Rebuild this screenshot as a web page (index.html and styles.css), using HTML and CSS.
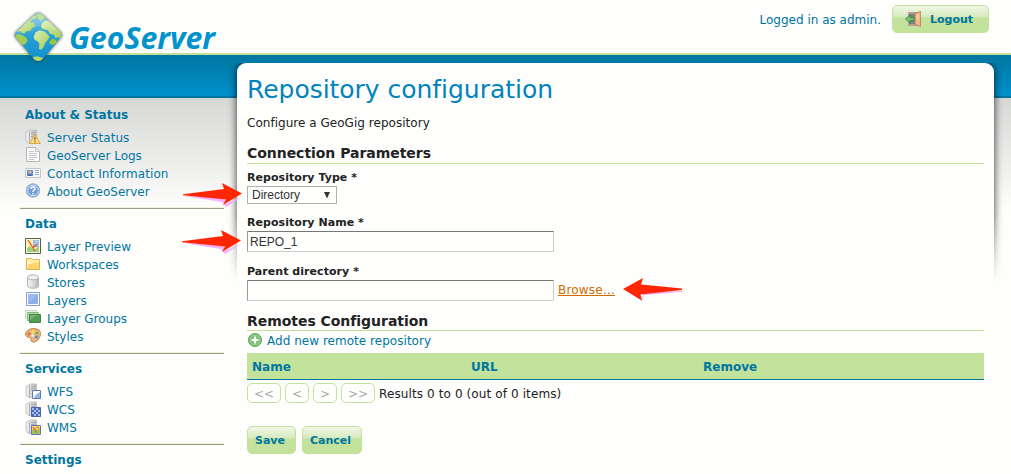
FILE: index.html
```html
<!DOCTYPE html>
<html lang="en">
<head>
<meta charset="utf-8">
<title>GeoServer: Repository configuration</title>
<link rel="stylesheet" href="styles.css">
</head>
<body>
<svg class="defs" width="0" height="0">
  <defs>
    <linearGradient id="metal"><stop offset="0" stop-color="#f2f2f2"/><stop offset=".5" stop-color="#dcdcdc"/><stop offset="1" stop-color="#b5b5b5"/></linearGradient>
    <linearGradient id="sea" x2="0" y2="1"><stop offset="0" stop-color="#8ccbe5"/><stop offset=".45" stop-color="#2ba0d5"/><stop offset="1" stop-color="#0a8dca"/></linearGradient>
    <linearGradient id="land" x2="1" y2="1"><stop offset="0" stop-color="#e1efb5"/><stop offset="1" stop-color="#9bcd53"/></linearGradient>
    <clipPath id="gem"><path d="M78 28Q91 16 104 28L156 77Q166 87 156 97L106 158Q91 172 76 158L26 97Q17 87 26 77Z"/></clipPath>
    <filter id="soft" x="-20%" y="-20%" width="140%" height="140%"><feGaussianBlur stdDeviation="4"/></filter>
  </defs>
  <symbol id="server" viewBox="0 0 16 16">
    <path d="M1 3.500L5 1H11.500V12L9 14.500H4L1 12.500Z" fill="url(#metal)" stroke="#bbb" stroke-width=".8"/>
    <path d="M4.500 3V14.500M6 3.500H10M6 5.500H10M6 7.500H10" stroke="#a2a2a2" stroke-width=".8" fill="none"/>
  </symbol>
  <symbol id="arrow" viewBox="0 0 62 26">
    <path d="M2 14L42 15L44 22L61 14L44 25L40 20Z" fill="#f5b0ff"/>
    <path d="M1 12.300L42 7L40 1L60 11.500L41 23L44 17.500L1 13.300Z" fill="#ff2600"/>
  </symbol>
</svg>

<header class="header">
  <svg class="logo" width="210" height="54" viewBox="0 0 210 54" role="img" aria-label="GeoServer">
    <g transform="translate(-4 -5) scale(.33333)">
      <path d="M78 26Q91 14 104 26L158 77Q168 87 158 97L106 160Q91 174 76 160L24 97Q14 87 24 77Z" fill="#333" opacity=".75" filter="url(#soft)"/>
      <g clip-path="url(#gem)">
        <path d="M15 15H170V175H15Z" fill="url(#sea)"/>
        <path d="M76 28L88 34L70 42L67 51L77 49L82 62L73 65L67 75L56 76L49 83L42 82L37 76L25 77V60Z" fill="url(#land)"/>
        <path d="M85 22L106 24L115 36L106 38L100 46L91 39Z" fill="#b8dd83"/>
        <path d="M101 53L112 43L119 45L126 41L160 77L168 90L156 101L151 93L142 96L138 86L126 83L119 72L106 70L99 64Z" fill="url(#land)"/>
        <path d="M83 79L95 73L111 77L125 92L119 102L113 109L106 124L100 132L93 128L94 113L88 105L80 102L77 92Z" fill="url(#land)"/>
        <path d="M22 86L38 85L53 94L59 102L54 112L45 117L41 126L28 108Z" fill="#9ecf50"/>
        <path d="M124 107L133 98L143 101L148 108L135 117L125 114Z" fill="#93c83f"/>
        <path d="M74 154L87 151L106 156L94 169L82 166Z" fill="#b7d866"/>
        <path d="M25 76L78 27Q91 15 104 27L158 79L138 73Q99 53 69 67T25 88Z" fill="#fff" opacity=".15"/>
      </g>
    </g>
    <text class="logo-text" x="57" y="37.500" textLength="146" lengthAdjust="spacingAndGlyphs">GeoServer</text>
  </svg>
  <div class="session">
    <span>Logged in as admin.</span>
    <a class="button logout">
      <svg width="17" height="16" viewBox="0 0 17 16"><path d="M3 1H15V15H3Z" fill="#b8a08b"/><path d="M4 3H10V13H4Z" fill="#74828a"/><path d="M10 2.500L15.500 .5V15.500L10 13Z" fill="#eeb983" stroke="#b57f53" stroke-width=".8"/><path d="M11.500 4L14 3V7.500L11.500 8Z" fill="#f7cf9f"/><path d="M.5 8L5 4V6.500H9V9.500H5V12Z" fill="#7dbe72" stroke="#35843c" stroke-width=".8"/></svg>
      <span>Logout</span>
    </a>
  </div>
</header>

<div class="page">
  <nav class="sidebar">
    <section class="menu">
      <h2>About &amp; Status</h2>
      <ul>
        <li><svg class="icon" viewBox="0 0 16 16"><use href="#server"/><path d="M10 5.500L15.300 14.500H4.700Z" fill="#ffe184" stroke="#dda642"/><path d="M10 8V11.500M10 12.300V13.500" stroke="#80602c" stroke-width="1.200"/></svg><span class="loose">Server Status</span></li>
        <li><svg class="icon" viewBox="0 0 16 16"><path d="M1.500 .5H10.500L14.500 4.500V14.500H1.500Z" fill="#fafafa" stroke="#b5b5b5"/><path d="M10.500 .5V4.500H14.500M4 4.500H9M4 6.500H12M4 8.500H12M4 10.500H12M4 12.500H9" fill="none" stroke="#c5c5c5"/></svg><span>GeoServer Logs</span></li>
        <li><svg class="icon" viewBox="0 0 16 16"><path d="M.5 3.500H15.500V12.500H.5Z" fill="#f5f7fa" stroke="#c5c5c5"/><path d="M2 5H8V11H2Z" fill="#5d8dd3"/><circle cx="5" cy="7" r="1.600" fill="#ffb56d"/><path d="M3 11Q5 7.500 7 11Z" fill="#3860a5"/><path d="M10 5.500H14M10 7.500H14M10 9.500H14" stroke="#9baabd"/></svg><span class="loose">Contact Information</span></li>
        <li><svg class="icon" viewBox="0 0 16 16"><circle cx="8" cy="7.500" r="6.700" fill="#6f9bd9" stroke="#9bb0d0"/><circle cx="8" cy="7.500" r="5.300" fill="none" stroke="#dce9fa"/><path d="M6 6Q6 4 8 4Q10 4 10 5.700Q10 6.700 8.700 7.300Q8 7.700 8 9M8 10V11.500" fill="none" stroke="#fff" stroke-width="1.500"/></svg><span>About GeoServer</span></li>
      </ul>
    </section>
    <section class="menu">
      <h2>Data</h2>
      <ul>
        <li><svg class="icon" viewBox="0 0 16 16"><path d="M.5 .5H15.500V15.500H.5Z" fill="#fff3a5" stroke="#52624d"/><path d="M8 2H14V9H8Z" fill="#91b8eb"/><path d="M2 10L5 8L9 12L14 8V14H2Z" fill="#9bd17e"/><path d="M9 3.500H14M9 6H14M11 2V8" stroke="#cbdffa" stroke-width=".7"/><path d="M3 2L10 13M8 10L12 6" fill="none" stroke="#e94f35" stroke-width="1.300"/><path d="M1.500 1.500H14.500V14.500H1.500Z" fill="none" stroke="#f6f9e7" stroke-width=".8"/></svg><span>Layer Preview</span></li>
        <li><svg class="icon" viewBox="0 0 16 16"><path d="M1.500 2.500H6.500L7.500 3.500H14.500V13.500H1.500Z" fill="#fff2b1" stroke="#e2b04d"/><path d="M2 7.500H6L8 6H14V13H2Z" fill="#ffd66d"/><path d="M2.500 12V7.500H6.500L8.500 6H13.500" fill="none" stroke="#fff2bd"/></svg><span>Workspaces</span></li>
        <li><svg class="icon" viewBox="0 0 16 16"><path d="M2.500 3V12C3 15 13 15 13.500 12V3Z" fill="url(#metal)" stroke="#b5b5b5"/><ellipse cx="8" cy="3.300" rx="5.500" ry="2.500" fill="#f0f0f0" stroke="#b5b5b5"/></svg><span>Stores</span></li>
        <li><svg class="icon" viewBox="0 0 16 16"><path d="M1.500 .5H14.500V13.500H1.500Z" fill="#fff" stroke="#829ed4"/><path d="M3 2H13V12H3Z" fill="#9bb9eb"/><path d="M3 12L13 2V12Z" fill="#8eade4"/></svg><span>Layers</span></li>
        <li><svg class="icon" viewBox="0 0 16 16"><path d="M.5 .5H11.500V8.500H.5Z" fill="#eaf4e7" stroke="#c5ddc3"/><path d="M2.500 2.500H13.500V10.500H2.500Z" fill="#b5d5af" stroke="#88b883"/><path d="M4.500 4.500H15.500V12.500H4.500Z" fill="#569c56" stroke="#3d8943"/><path d="M5 11Q9 5 15 5H5Z" fill="#7bb371"/></svg><span>Layer Groups</span></li>
        <li><svg class="icon" viewBox="0 0 16 16"><path d="M.5 6C1 1 9 -1 14 2C17 5 15 9 13 12C10 15 5 15 6 11C6 8 1 11 .5 6Z" fill="#eab67e" stroke="#c88755"/><circle cx="4" cy="6" r="1.700" fill="#e97148"/><circle cx="8" cy="3.500" r="1.500" fill="#ffe347"/><circle cx="12" cy="5" r="1.600" fill="#64b55b"/><circle cx="11.500" cy="9" r="1.600" fill="#5389cd"/><circle cx="7.500" cy="7.500" r="1.200" fill="#fff"/></svg><span>Styles</span></li>
      </ul>
    </section>
    <section class="menu">
      <h2>Services</h2>
      <ul>
        <li><svg class="icon" viewBox="0 0 16 16"><use href="#server"/><path d="M7.500 7.500H15.500V15.500H7.500Z" fill="#fff" stroke="#6073bc"/><path d="M9 15Q10 11 15 9V15Z" fill="#96b9e8"/></svg><span>WFS</span></li>
        <li><svg class="icon" viewBox="0 0 16 16"><use href="#server"/><path d="M6.500 6.500H15.500V15.500H6.500Z" fill="#4a67bb" stroke="#4c60ad"/><path d="M7 7H9V9H7ZM11 7H13V9H11ZM9 9H11V11H9ZM13 9H15V11H13ZM7 11H9V13H7ZM11 11H13V13H11ZM9 13H11V15H9ZM13 13H15V15H13Z" fill="#a9bfed"/></svg><span>WCS</span></li>
        <li><svg class="icon" viewBox="0 0 16 16"><use href="#server"/><path d="M7 7H15V15H7Z" fill="#ffe06a"/><path d="M7 11L10 9L12 11L15 9V15H7Z" fill="#9bc959"/><path d="M8 8L12 14M11 8L14 9" fill="none" stroke="#ee5633" stroke-width="1.300"/><path d="M6.500 6.500H15.500V15.500H6.500Z" fill="none" stroke="#6073bc"/></svg><span>WMS</span></li>
      </ul>
    </section>
    <section class="menu last"><h2>Settings</h2></section>
  </nav>

  <div class="panel">
    <main class="content">
      <h1>Repository configuration</h1>
      <p class="intro">Configure a GeoGig repository</p>
      <h3 class="first">Connection Parameters</h3>
      <div class="field type">
        <label>Repository Type *</label>
        <div class="control"><div class="select"><span>Directory</span><svg width="8" height="7"><path d="M1 0H7L4 6.500Z" fill="#333"/></svg></div></div>
        <svg class="pointer"><use href="#arrow"/></svg>
      </div>
      <div class="field name">
        <label for="name">Repository Name *</label>
        <div class="control"><input id="name" type="text" value="REPO_1"></div>
        <svg class="pointer"><use href="#arrow"/></svg>
      </div>
      <div class="field directory">
        <label for="dir">Parent directory *</label>
        <div class="control"><input id="dir" type="text"><a class="browse">Browse...</a></div>
        <svg class="pointer left" viewBox="0 0 62 26"><path d="M61 14L22 16L20 22L6 15L20 24L22 18L60 15Z" fill="#f5b0ff"/><path d="M1 12L21 1L19 7.500L60 11.500V13L18.500 17.500L20 23.500Z" fill="#ff2600"/></svg>
      </div>
      <h3>Remotes Configuration</h3>
      <a class="add"><svg width="16" height="16" viewBox="0 0 16 16"><circle cx="8" cy="7" r="6.500" fill="#78bd70" stroke="#5ba65a"/><circle cx="8" cy="7" r="5" fill="none" stroke="#a6d39f"/><path d="M8 3.500V10.500M4.500 7H11.500" stroke="#fff" stroke-width="2.200"/></svg><span>Add new remote repository</span></a>
      <div class="table-head"><span>Name</span><span>URL</span><span>Remove</span></div>
      <div class="pager"><span class="wide">&lt;&lt;</span><span>&lt;</span><span>&gt;</span><span class="wide">&gt;&gt;</span><p>Results 0 to 0 (out of 0 items)</p></div>
      <div class="actions"><a class="button save">Save</a><a class="button cancel">Cancel</a></div>
    </main>
  </div>
</div>
</body>
</html>
```
FILE: styles.css
```css
* { box-sizing: border-box; }
body {
  margin: 0;
  height: 474px;
  overflow: hidden;
  background: #fefefc;
  color: #222;
  font: 12px/18px "DejaVu Sans", Verdana, sans-serif;
}
h1, h2, h3, p, ul { margin: 0; padding: 0; }
ul { list-style: none; }
.defs { position: absolute; }

.header {
  height: 55px;
  border-bottom: 2px solid #c3e09b;
  display: flex;
  justify-content: space-between;
  padding: 5px 22px 0 12px;
}
.logo { position: relative; z-index: 1; margin-top: 6px; overflow: visible; }
.logo-text { font: italic bold 31px "Open Sans", sans-serif; fill: #0092cc; }
.session { display: flex; align-items: flex-start; gap: 11px; color: #0076a1; }
.session > span { padding-top: 6px; }
.button {
  display: flex;
  align-items: center;
  height: 28px;
  border: 1px solid #c2e19b;
  border-radius: 5px;
  background: linear-gradient(#f0f7e7 0%, #d8ebbf 40%, #c3e29c 46%, #c3e29c 100%);
  color: #0076a1;
  font-size: 11px;
  font-weight: bold;
}
.logout { width: 97px; padding-left: 12px; gap: 8px; }
.logout span { padding-top: 1px; }

.page {
  height: 419px;
  display: flex;
  background:
    linear-gradient(#0076a1, #0090ca 39px, #0090ca 41px, #0076a1 41px, #0076a1 43px, transparent 43px) 0 0 / 100% 43px no-repeat,
    linear-gradient(#d6d8d6, #fefefc) 0 43px / 100% 112px no-repeat;
}
.sidebar { width: 224px; padding: 45px 0 0 20px; flex: none; }
.menu { padding: 6px 5px 7px; border-bottom: 1px solid #969b7e; box-shadow: 0 -1px 0 #f0f5da inset; }
.menu h2 { font-size: 12px; line-height: 19px; height: 23px; color: #0076a1; }
.menu li { display: flex; height: 18px; gap: 6px; color: #0076a1; }
.menu.last { border: 0; box-shadow: none; }
.loose { letter-spacing: .08px; }
.icon { width: 16px; height: 16px; flex: none; }

.panel { position: relative; margin: 8px 0 0 13px; width: 757px; height: 411px; }
.panel::before {
  content: "";
  position: absolute;
  inset: 0;
  border-radius: 9px;
  box-shadow: 0 0 9px rgba(0, 0, 0, .8);
  clip-path: inset(-8px -12px 190px -12px);
  -webkit-mask: linear-gradient(#000 150px, transparent 219px);
  mask: linear-gradient(#000 150px, transparent 219px);
  -webkit-mask-clip: no-clip;
  mask-clip: no-clip;
}
.content {
  position: relative;
  height: 100%;
  padding: 12px 10px 0;
  border-radius: 9px;
  background: #fefefc;
}
h1 { font-size: 25px; line-height: 29px; height: 30px; font-weight: normal; color: #0084bb; letter-spacing: -.03px; }
.intro { padding-top: 9px; height: 39px; letter-spacing: .03px; }
h3 { font-size: 14px; line-height: 20px; height: 20px; border-bottom: 1px solid #c3e09b; letter-spacing: -.04px; }
h3.first { line-height: 18px; }
.field { position: relative; }
.field label { display: block; font-size: 11px; font-weight: bold; height: 16px; line-height: 18px; letter-spacing: .05px; }
.type { height: 45px; padding-top: 5px; }
.name { height: 49px; padding-top: 5px; }
.directory { height: 53px; padding-top: 5px; }
.control { display: flex; gap: 4px; padding-top: 1px; }
.select {
  display: flex;
  align-items: center;
  justify-content: space-between;
  width: 90px;
  height: 18px;
  padding: 0 5px 0 4px;
  border: 1px solid #b0b0b0;
  font: 12px/16px "Liberation Sans", Arial, sans-serif;
  color: #333;
}
input {
  width: 307px;
  height: 21px;
  padding: 1px 2px;
  border: 1px solid #ccc;
  border-top-color: #777;
  border-left-color: #999;
  background: #fefefc;
  color: #333;
  font: 12px "Liberation Sans", Arial, sans-serif;
}
.browse { padding-top: 1px; color: #d06b00; text-decoration: underline; letter-spacing: .2px; }
.pointer { position: absolute; left: -65px; top: 18px; width: 62px; height: 26px; }
.name .pointer { left: -66px; top: 20px; }
.pointer.left { left: 375px; top: 19px; }
.add { display: flex; gap: 4px; height: 22px; padding-top: 1px; color: #0076a1; letter-spacing: .03px; }
.add svg { margin-top: 1px; }
.table-head {
  display: grid;
  grid-template-columns: 219px 232px 1fr;
  height: 27px;
  padding-left: 5px;
  line-height: 28px;
  background: #c3e29c;
  border-bottom: 1px solid #0076a1;
  color: #0076a1;
  font-weight: bold;
}
.pager { display: flex; gap: 4px; height: 46px; padding-top: 3px; }
.pager span {
  width: 24px;
  height: 20px;
  border: 1px solid #c3e29c;
  border-radius: 5px;
  color: #aaa;
  text-align: center;
  line-height: 20px;
}
.pager .wide { width: 34px; }
.pager p { padding-top: 2px; letter-spacing: .11px; }
.actions { display: flex; gap: 6px; }
.actions .button { line-height: 28px; padding-top: 1px; }
.save { width: 49px; padding-left: 7px; }
.cancel { width: 60px; padding-left: 7px; }
```
